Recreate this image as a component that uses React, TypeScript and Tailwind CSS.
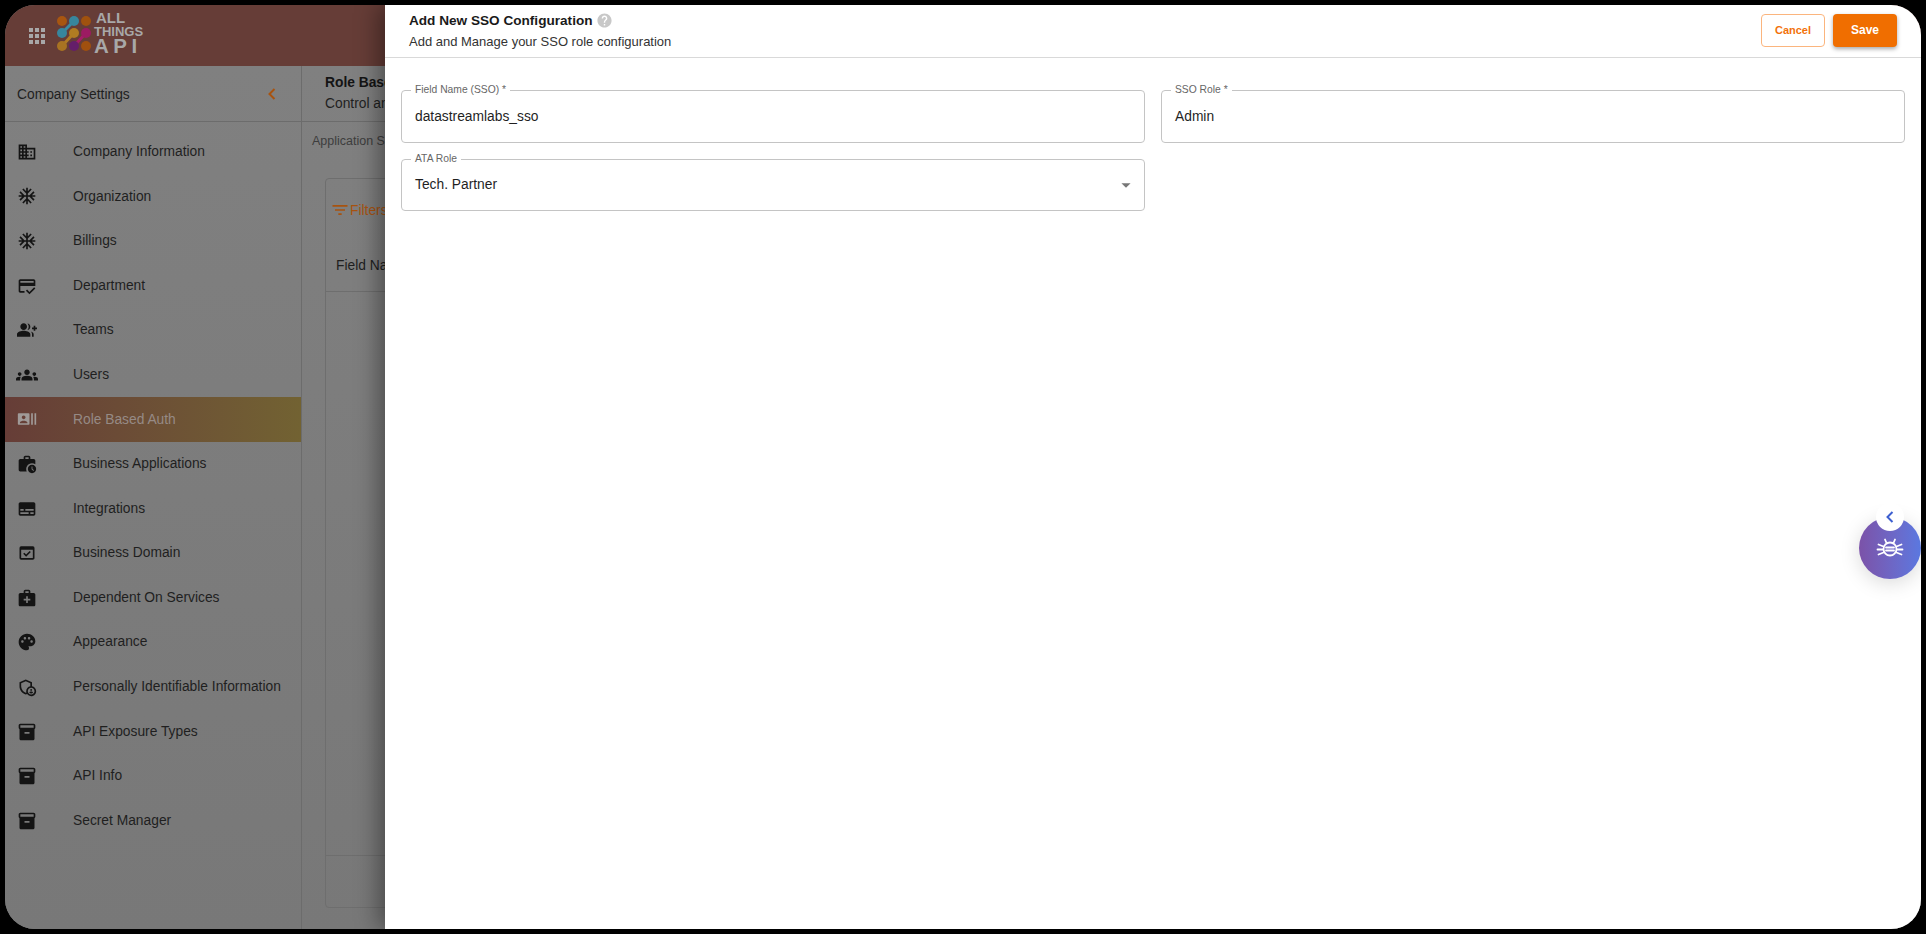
import {
  MdAcUnit,
  MdApps,
  MdArrowDropDown,
  MdDomain,
  MdFilterList,
  MdGroupAdd,
  MdGroups,
  MdHelp,
  MdInventory2,
  MdMedicalServices,
  MdOutlineAdminPanelSettings,
  MdOutlineCreditScore,
  MdOutlineDomainVerification,
  MdPalette,
  MdRecentActors,
  MdSubtitles,
  MdWorkHistory,
} from "react-icons/md"

const menuItems = [
  { label: "Company Information", icon: MdDomain },
  { label: "Organization", icon: MdAcUnit },
  { label: "Billings", icon: MdAcUnit },
  { label: "Department", icon: MdOutlineCreditScore },
  { label: "Teams", icon: MdGroupAdd },
  { label: "Users", icon: MdGroups, wide: true },
  { label: "Role Based Auth", icon: MdRecentActors, active: true },
  { label: "Business Applications", icon: MdWorkHistory },
  { label: "Integrations", icon: MdSubtitles },
  { label: "Business Domain", icon: MdOutlineDomainVerification },
  { label: "Dependent On Services", icon: MdMedicalServices },
  { label: "Appearance", icon: MdPalette },
  { label: "Personally Identifiable Information", icon: MdOutlineAdminPanelSettings },
  { label: "API Exposure Types", icon: MdInventory2 },
  { label: "API Info", icon: MdInventory2 },
  { label: "Secret Manager", icon: MdInventory2 },
]

const Chevron = ({ className }: { className: string }) => (
  <svg width="10" height="14" viewBox="0 0 10 14" fill="none" className={className}>
    <path d="M7.5 2 2.5 7l5 5" stroke="currentColor" strokeWidth="2" />
  </svg>
)

const Logo = () => (
  <div className="flex items-center gap-[2px]">
    <svg width="44" height="44" viewBox="0 0 44 44">
      <line x1="19" y1="7" x2="7" y2="19" stroke="#3a8ba3" strokeWidth="3" />
      <line x1="19" y1="19" x2="7" y2="32" stroke="#b07a25" strokeWidth="3" />
      <line x1="31" y1="19" x2="19" y2="32" stroke="#a51d68" strokeWidth="3" />
      <circle cx="7" cy="7" r="5" fill="#a85610" />
      <circle cx="19" cy="7" r="5" fill="#37869d" />
      <circle cx="31" cy="7" r="5" fill="#a0520e" />
      <circle cx="7" cy="19" r="5" fill="#37869d" />
      <circle cx="19" cy="19" r="5" fill="#b07c22" />
      <circle cx="31" cy="19" r="5" fill="#9c1b62" />
      <circle cx="7" cy="32" r="5" fill="#a87322" />
      <circle cx="19" cy="32" r="5" fill="#641e6a" />
      <circle cx="31" cy="32" r="5" fill="#a0500e" />
    </svg>
    <div className="flex flex-col text-[#a8a8a8] font-bold -ml-[7px] -mt-[6px]">
      <span className="text-[15px] leading-[14px] pl-[2px]">ALL</span>
      <span className="text-[13px] leading-[13px]">THINGS</span>
      <span className="text-[20.5px] leading-[16px] tracking-[4.5px]">API</span>
    </div>
  </div>
)

const BugIcon = () => (
  <svg width="30" height="30" viewBox="0 0 30 30" fill="none" stroke="white" strokeWidth="1.8" strokeLinecap="round">
    <circle cx="15" cy="16" r="6.5" />
    <path d="M11 14.5h8M11 17.5h8" />
    <path d="M11.5 10 10 6.5M18.5 10 20 6.5" />
    <path d="M8.5 13.5 3.5 11.5M8 16.5H2.5M8.5 19.5l-5 2" />
    <path d="M21.5 13.5l5-2M22 16.5h5.5M21.5 19.5l5 2" />
  </svg>
)

const Field = ({ label, value, select }: { label: string; value: string; select?: boolean }) => (
  <div className="relative h-[52.5px] border border-[#c4c4c4] rounded-[4px] flex items-center justify-between pl-[13px] pr-[7px]">
    <label className="absolute -top-[7px] left-[9px] bg-white px-[4px] text-[10.3px] leading-[12px] text-[#666666]">
      {label}
    </label>
    <span className={`text-[13.8px] text-[#1f1f1f] ${select ? "mt-[1px]" : "mt-[2px]"}`}>{value}</span>
    {select && <MdArrowDropDown className="text-[#777777]" size={22} />}
  </div>
)

const App = () => {
  return (
    <div className="h-screen w-full bg-black p-[5px] font-['Liberation_Sans',sans-serif]">
      <div className="relative h-full rounded-[30px] overflow-hidden flex flex-col bg-[#7f7f7f]">
        <header className="h-[61px] shrink-0 bg-[#663d37] flex items-center pl-[20px] gap-[6px]">
          <MdApps size={24} className="text-[#a8a8a8]" />
          <Logo />
        </header>

        <div className="flex flex-1 min-h-0">
          <aside className="w-[297px] shrink-0 border-r border-[#6c6c6c] bg-gradient-to-b from-[#808080] to-[#787878]">
            <div className="h-[56px] flex items-center justify-between pl-[12px] pr-[24px] border-b border-[#6c6c6c]">
              <span className="text-[13.8px] text-[#1f1f1f] mt-[3px]">Company Settings</span>
              <Chevron className="text-[#a8530f] mt-[1px]" />
            </div>
            <nav className="pt-[7.5px]">
              {menuItems.map((item) => {
                const Icon = item.icon
                return (
                  <div
                    key={item.label}
                    className={`h-[44.6px] flex items-center pl-[12px] ${
                      item.active ? "bg-gradient-to-r from-[#663d37] to-[#726232] text-[#968a85]" : "text-[#1f1f1f]"
                    }`}
                  >
                    <span className="w-[20px] shrink-0 flex justify-center">
                      <Icon
                        size={item.wide ? 22 : 20}
                        className={`shrink-0 ${item.active ? "text-[#a09a98]" : "text-[#141414]"}`}
                      />
                    </span>
                    <span className="ml-[36px] text-[13.8px] mt-[1px]">{item.label}</span>
                  </div>
                )
              })}
            </nav>
          </aside>

          <main className="flex-1 min-w-0 flex flex-col bg-gradient-to-b from-[#808080] to-[#787878]">
            <div className="h-[56px] shrink-0 flex flex-col justify-center pl-[23px] border-b border-[#6c6c6c]">
              <h1 className="text-[13.8px] font-bold text-[#141414] leading-[20px]">Role Based</h1>
              <p className="text-[13.8px] text-[#1f1f1f] leading-[21px]">Control and</p>
            </div>
            <p className="pl-[10px] pt-[11px] text-[12.5px] text-[#3d3d3d] leading-[16px]">Application SSO</p>
            <div className="ml-[23px] mt-[29px] mr-[24px] mb-[21px] flex-1 flex flex-col border border-[#6e6e6e] rounded-[4px]">
              <div className="h-[62px] flex items-center pl-[4px] text-[#a8530f]">
                <MdFilterList size={20} />
                <span className="text-[13.8px] mt-[2px]">Filters</span>
              </div>
              <div className="h-[51px] flex items-center pl-[10px] border-b border-[#6e6e6e] text-[13.8px] text-[#1f1f1f]">
                Field Name
              </div>
              <div className="flex-1" />
              <div className="h-[52px] border-t border-[#6e6e6e]" />
            </div>
          </main>
        </div>

        <section className="absolute inset-y-0 right-0 w-[1536px] bg-white shadow-[-6px_0_22px_rgba(0,0,0,0.4)]">
          <div className="h-[52.5px] border-b border-[#d9d9d9] flex items-center justify-between px-[24px]">
            <div>
              <div className="flex items-center gap-[3px] h-[24px] -mt-[2px]">
                <h2 className="text-[13.6px] font-bold text-[#1a1a1a]">Add New SSO Configuration</h2>
                <MdHelp size={17} className="text-[#c8c8c8]" />
              </div>
              <p className="text-[13px] leading-[18px] text-[#333333]">Add and Manage your SSO role configuration</p>
            </div>
            <div className="flex items-center gap-[8px] -mt-[1px]">
              <button className="w-[64px] h-[33px] rounded-[4px] border border-[#fbb57e] bg-white text-[#f2720c] text-[11px] font-bold">
                Cancel
              </button>
              <button className="w-[64px] h-[33px] rounded-[4px] bg-[#f06e00] text-white text-[12px] font-bold shadow-[0_2px_4px_rgba(0,0,0,0.35)]">
                Save
              </button>
            </div>
          </div>

          <div className="grid grid-cols-2 gap-[16px] px-[16px] pt-[32.5px]">
            <Field label="Field Name (SSO) *" value="datastreamlabs_sso" />
            <Field label="SSO Role *" value="Admin" />
            <Field label="ATA Role" value="Tech. Partner" select />
          </div>
        </section>

        <div className="absolute right-0 top-[512px] size-[62px] rounded-full bg-gradient-to-r from-[#7b52a8] to-[#5a78e0] flex items-center justify-center shadow-[0_4px_20px_rgba(0,0,0,0.15)]">
          <BugIcon />
        </div>
        <div className="absolute right-[17px] top-[498px] size-[28px] rounded-full bg-white flex items-center justify-center">
          <Chevron className="text-[#3d5fd0]" />
        </div>
      </div>
    </div>
  )
}

export default App
